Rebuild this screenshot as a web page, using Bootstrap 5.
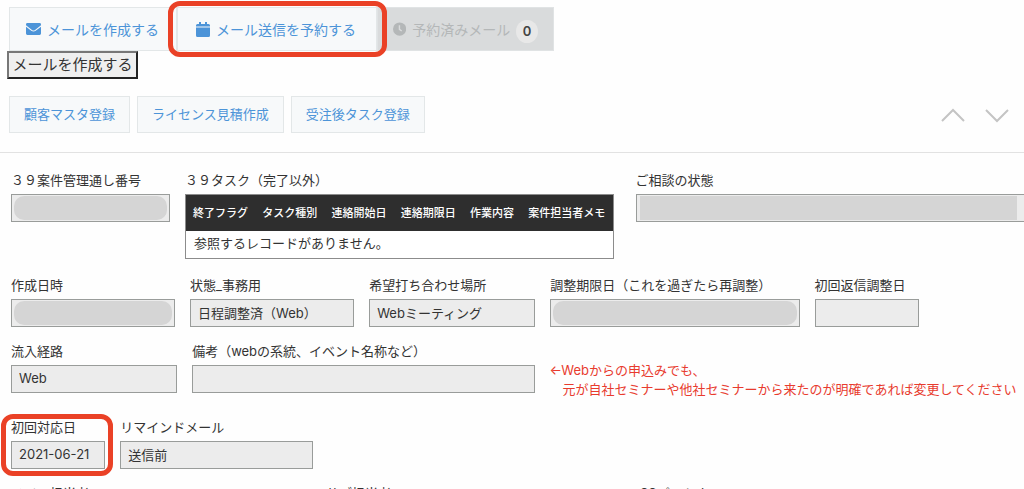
<!DOCTYPE html>
<html lang="ja">
<head>
<meta charset="utf-8">
<meta name="viewport" content="width=device-width, initial-scale=1">
<title>案件管理</title>
<link href="https://cdn.jsdelivr.net/npm/bootstrap@5.3.0/dist/css/bootstrap.min.css" rel="stylesheet">
<style>
  body { font-family: Inter, "Noto Sans CJK JP", sans-serif; font-size: 13px; line-height: 20px; color: #333; background: #fefefe; overflow: hidden; }
  .action-btn { --bs-btn-color: #4c94d8; --bs-btn-bg: #f7f9fa; --bs-btn-border-color: #e3e7e8; --bs-btn-hover-color: #3a7fc0; --bs-btn-hover-bg: #eef3f6; --bs-btn-hover-border-color: #d5dbdd; --bs-btn-border-radius: 0; --bs-btn-font-size: 13px; --bs-btn-line-height: 19px; --bs-btn-padding-x: 14px; --bs-btn-padding-y: 8px; --bs-btn-disabled-color: #b4b7b8; --bs-btn-disabled-bg: #d9dbdc; --bs-btn-disabled-border-color: #e0e3e4; --bs-btn-disabled-opacity: 1; white-space: nowrap; }
  .mail-bar { padding: 7px 9px 0; }
  .mail-bar .action-btn { --bs-btn-font-size: 14px; height: 44px; display: flex; align-items: center; gap: 6px; }
  .mail-bar .compose { width: 168px; --bs-btn-padding-x: 16px; }
  .mail-bar .reserve { width: 200px; --bs-btn-padding-x: 18px; }
  .mail-bar .reserved { width: 177px; --bs-btn-padding-x: 15px; }
  .count-pill { width: 23px; height: 23px; background: #e8e8e8; color: #444; font-size: 13px; line-height: 23px; font-weight: 600; text-align: center; }
  .marker { border: 5px solid #ea4126; border-radius: 12px; pointer-events: none; position: absolute; }
  .around-button { inset: -6px -10px -6px -9px; }
  .around-field { inset: -3px -8px -7px -10px; }
  .native-btn { margin-left: 7px; width: 131px; height: 28px; padding: 0; font-size: 15px; line-height: 20px; color: #333; background: #efefef; border: 2px solid; border-color: #777 #222 #222 #777; white-space: nowrap; }
  .task-bar { padding: 17px 9px 19px; border-bottom: 1px solid #e2e2e2; }
  .task-buttons { gap: 7px; }
  .pager-btn { --bs-btn-padding-x: 0; --bs-btn-padding-y: 0; --bs-btn-border-width: 0; line-height: 0; }
  .form-area { padding: 17px 0 0 11px; }
  .record-row { display: flex; align-items: flex-start; gap: 15px; margin-bottom: 14px; }
  .record-row.with-table { margin-bottom: 16px; }
  .record-row.spaced { padding-top: 4px; }
  .record-row label, .field-label { display: block; line-height: 20px; margin-bottom: 4px; white-space: nowrap; }
  .value-box { height: 28px; padding: 0 7px 2px; font-size: 13px; line-height: 20px; color: #333; background: #ececec; border: 1px solid #999c9a; border-radius: 0; }
  .value-box:focus { background: #ececec; box-shadow: none; border-color: #4c94d8; }
  .veil { background: #d5d5d5; border-radius: 10px; height: 24px; position: absolute; bottom: 2px; left: 3px; right: 3px; }
  .veil.square { border-radius: 0; left: 4px; right: 7px; }
  .w-1 { width: 15.7%; } .w-task { width: 42.3%; } .w-2 { width: 16.2%; } .w-3 { width: 16.4%; }
  .w-limit { width: 24.6%; } .w-reply { width: 10.3%; } .w-memo { width: 33.8%; } .w-date { width: 9.3%; } .w-remind { width: 19%; }
  .record-row > div { flex-shrink: 0; }
  .status-col { padding-left: 7px; }
  .task-table { border: 1px solid #8c8c8c; margin: 0; }
  .task-table th { background: #2e2e2e; color: #fff; font-size: 11px; font-weight: 500; line-height: 20px; padding: 8px 7px; white-space: nowrap; border: 0; }
  .task-table td { padding: 2px 8px 5px; line-height: 20px; border: 0; background: #fff; color: #333; }
  .notice { color: #e83b2e; line-height: 19px; padding-top: 20px; white-space: nowrap; }
  .foot-labels .main-col { width: 315px; } .foot-labels .sub-col { width: 314px; }
</style>
</head>
<body>
<header>
  <div class="mail-bar d-flex">
    <button class="btn action-btn compose">
      <svg width="15" height="12" viewBox="0 0 15 12" fill="currentColor" aria-hidden="true"><path d="M1.4 0h12.2A1.4 1.4 0 0 1 15 1.4v.8L9 6.9Q7.500 8 6 6.900L0 2.200v-.8A1.400 1.400 0 0 1 1.400 0z"/><path d="M0 3.700l5.300 4.100q2.200 1.600 4.400 0L15 3.700v6.900a1.400 1.400 0 0 1-1.400 1.400H1.400A1.400 1.400 0 0 1 0 10.600z"/></svg>
      <span>メールを作成する</span>
    </button>
    <div class="position-relative z-1">
      <button class="btn action-btn reserve">
        <svg width="14" height="15" viewBox="0 0 14 15" fill="currentColor" aria-hidden="true"><path d="M3 0h2v2h4V0h2v2h1.500A1.500 1.500 0 0 1 14 3.500V4.600H0V3.500A1.500 1.500 0 0 1 1.500 2H3zM0 5.400h14v8.100a1.500 1.500 0 0 1-1.500 1.500h-11A1.500 1.500 0 0 1 0 13.500z"/></svg>
        <span>メール送信を予約する</span>
      </button>
      <div class="marker around-button"></div>
    </div>
    <button class="btn action-btn reserved" disabled>
      <svg width="14" height="14" viewBox="0 0 14 14" aria-hidden="true"><circle cx="7" cy="7" r="7" fill="currentColor"/><path d="M6.800 3v4.300l2.400 1.800" fill="none" stroke="#d9dbdc" stroke-width="1.500"/></svg>
      <span>予約済みメール</span><span class="count-pill rounded-circle mt-1">0</span>
    </button>
  </div>
  <button class="native-btn d-block">メールを作成する</button>
  <div class="task-bar d-flex align-items-center">
    <div class="d-flex task-buttons">
      <button class="btn action-btn">顧客マスタ登録</button>
      <button class="btn action-btn">ライセンス見積作成</button>
      <button class="btn action-btn">受注後タスク登録</button>
    </div>
    <div class="d-flex ms-auto pe-1 gap-3">
      <button class="btn pager-btn" aria-label="前のレコード"><svg width="28" height="20" fill="none" stroke="#c4c4c4" stroke-width="2"><path d="M3 16L14 5l11 11"/></svg></button>
      <button class="btn pager-btn" aria-label="次のレコード"><svg width="28" height="20" fill="none" stroke="#c4c4c4" stroke-width="2"><path d="M3 5l11 11L25 5"/></svg></button>
    </div>
  </div>
</header>
<main class="form-area">
  <div class="record-row with-table">
    <div class="w-1"><label for="serial">３９案件管理通し番号</label><div class="position-relative"><input id="serial" class="form-control value-box" readonly><div class="veil"></div></div></div>
    <div class="w-task"><div class="field-label">３９タスク（完了以外）</div>
      <table class="table task-table">
        <thead><tr><th>終了フラグ</th><th>タスク種別</th><th>連絡開始日</th><th>連絡期限日</th><th>作業内容</th><th>案件担当者メモ</th></tr></thead>
        <tbody><tr><td colspan="6">参照するレコードがありません。</td></tr></tbody>
      </table>
    </div>
    <div class="flex-fill status-col"><label for="status">ご相談の状態</label><div class="position-relative"><input id="status" class="form-control value-box border-end-0" readonly><div class="veil square"></div></div></div>
  </div>
  <div class="record-row">
    <div class="w-2"><label for="created">作成日時</label><div class="position-relative"><input id="created" class="form-control value-box" readonly><div class="veil"></div></div></div>
    <div class="w-2"><label for="office">状態_事務用</label><input id="office" class="form-control value-box" value="日程調整済（Web）" readonly></div>
    <div class="w-3"><label for="place">希望打ち合わせ場所</label><input id="place" class="form-control value-box" value="Webミーティング" readonly></div>
    <div class="w-limit"><label for="limit">調整期限日（これを過ぎたら再調整）</label><div class="position-relative"><input id="limit" class="form-control value-box" readonly><div class="veil"></div></div></div>
    <div class="w-reply"><label for="reply">初回返信調整日</label><input id="reply" class="form-control value-box" readonly></div>
  </div>
  <div class="record-row">
    <div class="w-3"><label for="route">流入経路</label><input id="route" class="form-control value-box" value="Web" readonly></div>
    <div class="w-memo"><label for="memo">備考（webの系統、イベント名称など）</label><input id="memo" class="form-control value-box" readonly></div>
    <div class="notice">←Webからの申込みでも、<br>　元が自社セミナーや他社セミナーから来たのが明確であれば変更してください</div>
  </div>
  <div class="record-row spaced">
    <div class="w-date position-relative"><label for="first">初回対応日</label><input id="first" class="form-control value-box" value="2021-06-21" readonly><div class="marker around-field"></div></div>
    <div class="w-remind"><label for="remind">リマインドメール</label><input id="remind" class="form-control value-box" value="送信前" readonly></div>
  </div>
  <div class="foot-labels d-flex">
    <div class="main-col">メイン担当者</div><div class="sub-col">サブ担当者</div><div>SSパートナー</div>
  </div>
</main>
<script src="https://cdn.jsdelivr.net/npm/bootstrap@5.3.0/dist/js/bootstrap.bundle.min.js"></script>
</body>
</html>
